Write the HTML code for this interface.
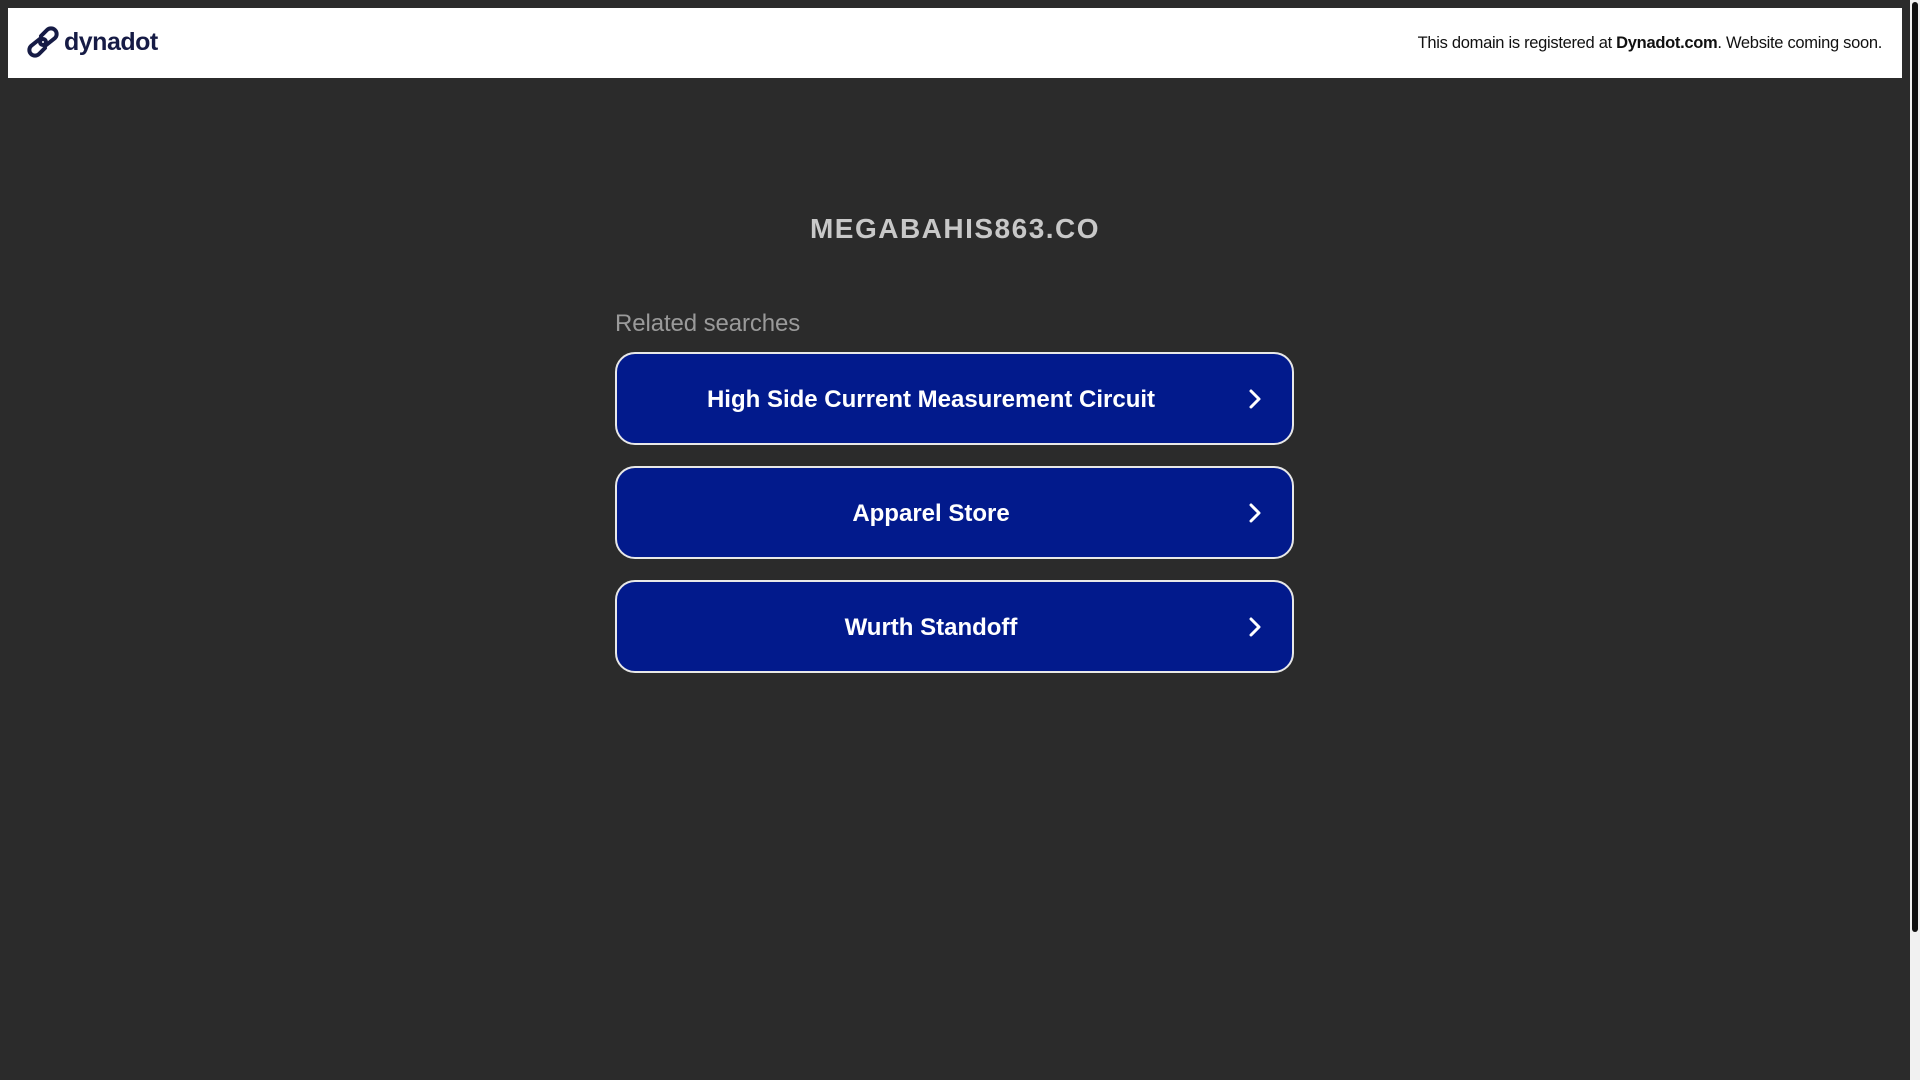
<!DOCTYPE html>
<html><head><style>
html,body{margin:0;padding:0}
body{width:1920px;height:1080px;background:#2b2b2b;position:relative;overflow:hidden;font-family:"Liberation Sans",sans-serif}
.hdr{position:absolute;left:8px;top:8px;width:1894px;height:70px;background:#fff}
.logo{position:absolute;left:27px;top:26px}
.logotxt{position:absolute;left:64px;top:28px;font-size:25px;font-weight:bold;color:#161b45;letter-spacing:-0.5px}
.msg{position:absolute;right:38px;top:34px;font-size:16.5px;color:#111;letter-spacing:-0.3px}
.sb{position:absolute;left:1910px;top:0;width:10px;height:1080px;background:#f1f1f1}
.thumb{position:absolute;left:1912px;top:2px;width:6px;height:930px;background:#111;border-radius:3px}
.title{position:absolute;left:0;width:1910px;top:213px;text-align:center;font-size:28px;font-weight:bold;color:#c8c8c8;letter-spacing:1.5px}
.rel{position:absolute;left:615px;top:310px;font-size:24px;color:#9a9a9a;letter-spacing:-0.1px}
.btn{position:absolute;left:615px;width:675px;height:89px;border:2px solid #e8e8e8;border-radius:20px;background:#021a8c;color:#fff;font-weight:bold;font-size:24px;line-height:91px;text-align:center;box-sizing:content-box}
.btn span{position:absolute;left:0;width:628px;text-align:center}
.btn svg{position:absolute;left:631px;top:34px}
</style></head><body>
<div class="hdr"></div>
<svg class="logo" width="32" height="32" viewBox="0 0 32 32"><g fill="none" stroke="#161b45" stroke-width="4" stroke-linecap="round"><path d="M14 10 L20 4 A5 5 0 0 1 28 12 L18 20"/><path d="M18 22 L12 28 A5 5 0 0 1 4 20 L14 12"/><circle cx="16" cy="16" r="3"/></g></svg>
<div class="logotxt">dynadot</div>
<div class="msg">This domain is registered at <b>Dynadot.com</b>. Website coming soon.</div>
<div class="sb"></div><div class="thumb"></div>
<div class="title">MEGABAHIS863.CO</div>
<div class="rel">Related searches</div>
<div class="btn" style="top:352px"><span>High Side Current Measurement Circuit</span><svg width="14" height="22" viewBox="0 0 14 22"><path d="M3 3 L11 11 L3 19" fill="none" stroke="#fff" stroke-width="3" stroke-linecap="round" stroke-linejoin="round"/></svg></div>
<div class="btn" style="top:466px"><span>Apparel Store</span><svg width="14" height="22" viewBox="0 0 14 22"><path d="M3 3 L11 11 L3 19" fill="none" stroke="#fff" stroke-width="3" stroke-linecap="round" stroke-linejoin="round"/></svg></div>
<div class="btn" style="top:580px"><span>Wurth Standoff</span><svg width="14" height="22" viewBox="0 0 14 22"><path d="M3 3 L11 11 L3 19" fill="none" stroke="#fff" stroke-width="3" stroke-linecap="round" stroke-linejoin="round"/></svg></div>
</body></html>
